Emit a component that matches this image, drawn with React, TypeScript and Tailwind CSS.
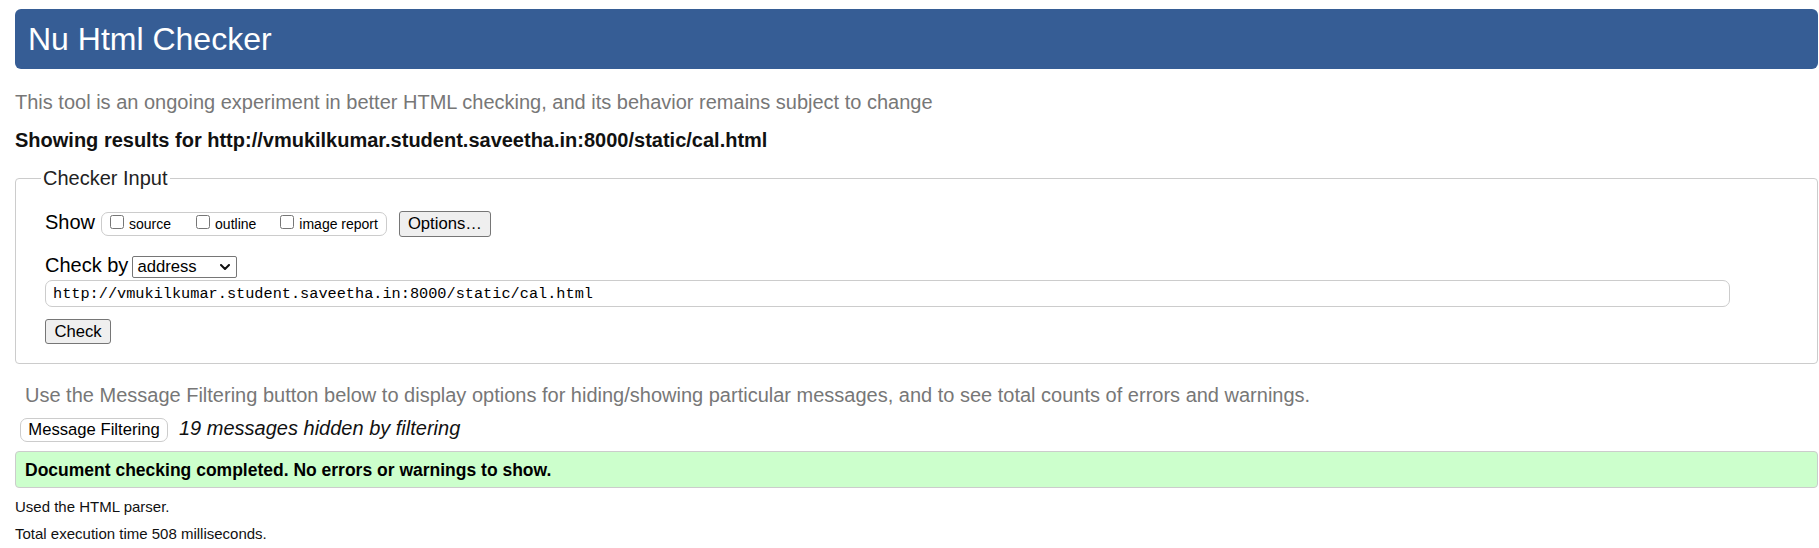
import React from "react";

function Checkbox({ label, className = "" }: { label: string; className?: string }) {
  return (
    <label className={`flex items-baseline ${className}`}>
      <input type="checkbox" className="h-[14px] w-[14px]" />
      <span className="ml-[5px] text-[14px] leading-[22px]">{label}</span>
    </label>
  );
}

export default function App() {
  return (
    <div className="min-h-[548px] bg-white pl-[15px] pr-[1px] pt-[9px] font-['Liberation_Sans',Arial,sans-serif] text-black">
      <h1 className="flex h-[60px] items-center rounded-[6px] bg-[#365d95] pl-[13px] text-[32px] font-normal leading-none text-white">
        Nu Html Checker
      </h1>

      <p className="mt-[21px] text-[20px] leading-[24px] text-[#777]">
        This tool is an ongoing experiment in better HTML checking, and its behavior remains subject to change
      </p>

      <p className="mt-[14px] text-[20px] font-bold leading-[24px] text-[#111]">
        Showing results for http://vmukilkumar.student.saveetha.in:8000/static/cal.html
      </p>

      <fieldset className="mt-[14px] rounded-[4px] border border-[#ccc] pb-[19px] pl-[29px] pr-[29px]">
        <legend className="ml-[-4px] px-[2px] text-[20px] leading-[24px] text-[#222]">Checker Input</legend>

        <div className="mt-[20px] flex items-baseline">
          <span className="text-[20px] leading-[24px]">Show</span>
          <div className="ml-[6px] flex h-[24px] items-baseline rounded-[7px] border border-[#ccc] pl-[8px] pr-[8px]">
            <Checkbox label="source" />
            <Checkbox label="outline" className="ml-[25px]" />
            <Checkbox label="image report" className="ml-[24px]" />
          </div>
          <button
            type="button"
            className="ml-[12px] flex h-[26px] w-[92px] items-center justify-center rounded-[3px] border border-[#767676] bg-[#efefef] text-[16.67px] leading-[20px]"
          >
            <span>Options…</span>
          </button>
        </div>

        <div className="mt-[16px] flex items-baseline">
          <span className="text-[20px] leading-[24px]">Check by</span>
          <div className="relative ml-[4px] flex items-baseline">
            <select
              defaultValue="address"
              className="h-[22px] w-[105px] appearance-none rounded-[2px] border border-[#767676] bg-white pl-[4px] text-[16.67px] leading-[20px] text-black"
            >
              <option value="address">address</option>
              <option value="upload">file upload</option>
              <option value="text">text input</option>
            </select>
            <svg
              className="pointer-events-none absolute right-[7px] top-1/2 -translate-y-1/2"
              width="10"
              height="6"
              viewBox="0 0 10 6"
              fill="none"
            >
              <path d="M1 1 L5 5 L9 1" stroke="#111" strokeWidth="2" strokeLinecap="round" strokeLinejoin="round" />
            </svg>
          </div>
        </div>

        <input
          type="text"
          readOnly
          value="http://vmukilkumar.student.saveetha.in:8000/static/cal.html"
          className="mt-[2px] block h-[27px] w-[1685px] rounded-[7px] border border-[#ccc] bg-white pl-[7px] font-['Liberation_Mono','DejaVu_Sans_Mono',monospace] text-[15.25px] text-black outline-none"
        />

        <button
          type="button"
          className="mt-[12px] flex h-[25px] w-[66px] items-center justify-center rounded-[3px] border border-[#767676] bg-[#efefef] text-[16.67px] leading-[20px]"
        >
          Check
        </button>
      </fieldset>

      <p className="mt-[19px] pl-[10px] text-[20px] leading-[24px] text-[#777]">
        Use the Message Filtering button below to display options for hiding/showing particular messages, and to see total counts of errors and warnings.
      </p>

      <div className="mt-[9px] flex items-baseline">
        <button
          type="button"
          className="ml-[5px] flex h-[24px] w-[148px] items-center justify-center rounded-[7px] border border-[#ccc] bg-white text-[16.67px] leading-[20px]"
        >
          Message Filtering
        </button>
        <span className="ml-[11px] text-[20px] italic leading-[24px] text-[#111]">19 messages hidden by filtering</span>
      </div>

      <div className="mt-[9px] flex h-[37px] items-center rounded-[4px] border border-[#ccc] bg-[#ccffcc] pl-[9px]">
        <p className="text-[17.5px] font-bold leading-[20px]">
          Document checking completed. No errors or warnings to show.
        </p>
      </div>

      <p className="mt-[10px] text-[15px] leading-[18px] text-[#111]">Used the HTML parser.</p>
      <p className="mt-[9px] text-[15px] leading-[18px] text-[#111]">Total execution time 508 milliseconds.</p>
    </div>
  );
}
